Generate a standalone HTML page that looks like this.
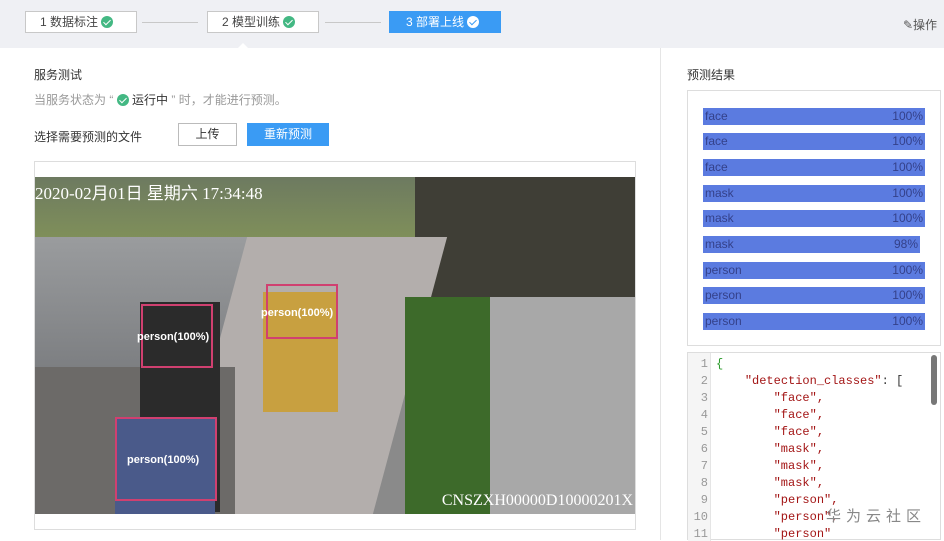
<!DOCTYPE html><html><head><meta charset="utf-8"><style>
*{margin:0;padding:0;box-sizing:border-box}
body{width:944px;height:540px;overflow:hidden;background:#fff;font-family:"Liberation Sans","Noto Sans CJK SC",sans-serif;font-size:12px;color:#333;position:relative}
.top{position:absolute;left:0;top:0;width:944px;height:48px;background:#eff0f4}
.step{position:absolute;top:11px;height:22px;border:1px solid #c8c8c8;background:#fff;font-size:12px;line-height:20px;padding-left:14px;color:#444}
.step.a{background:#3a9bf4;border-color:#3a9bf4;color:#fff}
.chk{display:inline-block;width:12px;height:12px;border-radius:50%;background:#43b883;vertical-align:-2px;margin-left:3px;position:relative}
.chk:after{content:"";position:absolute;left:4px;top:2px;width:3px;height:6px;border:solid #fff;border-width:0 1.5px 1.5px 0;transform:rotate(45deg)}
.chk.w{background:#fff}.chk.w:after{border-color:#3a9bf4}
.line{position:absolute;top:22px;height:1px;background:#c8c8c8}
.abs{position:absolute}
.bar{position:absolute;left:703px;width:222px;height:17px;background:#5b7be0;color:#34418a;font-size:12px;line-height:17px;padding:0 2px}
.bar span{position:absolute;right:2px}
.code{position:absolute;left:687px;top:352px;width:254px;height:188px;border:1px solid #ddd;font-family:"Liberation Mono",monospace;font-size:12px}
.gut{position:absolute;left:0;top:0;width:23px;height:188px;background:#f5f5f5;border-right:1px solid #e5e5e5}
.ln{position:absolute;left:0;width:20px;text-align:right;color:#999}
.cl{position:absolute;left:28px;color:#a31515;white-space:pre}
</style></head><body>
<div class="top"></div>
<div class="step" style="left:25px;width:112px">1 数据标注<span class="chk"></span></div>
<div class="line" style="left:142px;width:56px"></div>
<div class="step" style="left:207px;width:112px">2 模型训练<span class="chk"></span></div>
<div class="line" style="left:325px;width:56px"></div>
<div class="step a" style="left:389px;width:112px;padding-left:16px">3 部署上线<span class="chk w"></span></div>
<div class="abs" style="left:237px;top:43px;width:0;height:0;border-left:6px solid transparent;border-right:6px solid transparent;border-bottom:6px solid #fff"></div>
<div class="abs" style="left:903px;top:16px;color:#555">&#9998;操作</div>
<div class="abs" style="left:10px;top:48px;width:650px;height:492px;background:#fff"></div>
<div class="abs" style="left:660px;top:48px;width:1px;height:492px;background:#e5e5e5"></div>
<div class="abs" style="left:34px;top:66px">服务测试</div>
<div class="abs" style="left:34px;top:91px;color:#999">当服务状态为 “ <span class="chk" style="margin:0"></span> <span style="color:#333">运行中</span> ” 时，才能进行预测。</div>
<div class="abs" style="left:34px;top:128px">选择需要预测的文件</div>
<div class="abs" style="left:178px;top:123px;width:59px;height:23px;border:1px solid #bbb;text-align:center;line-height:21px">上传</div>
<div class="abs" style="left:247px;top:123px;width:82px;height:23px;background:#3a9bf4;color:#fff;text-align:center;line-height:23px">重新预测</div>
<div class="abs" style="left:34px;top:161px;width:602px;height:369px;border:1px solid #ddd"></div>
<div class="abs" style="left:35px;top:177px;width:600px;height:337px;overflow:hidden;background:#8a8a8a">
 <div class="abs" style="left:0;top:0;width:380px;height:60px;background:linear-gradient(#6d7a60,#7f8f5a)"></div>
 <div class="abs" style="left:0;top:60px;width:380px;height:130px;background:linear-gradient(#9a9c9e,#7d7f82)"></div>
 <div class="abs" style="left:380px;top:0;width:220px;height:120px;background:#3f3e36"></div>
 <div class="abs" style="left:175px;top:60px;width:200px;height:277px;background:#b3aeac;transform:skewX(-15deg)"></div>
 <div class="abs" style="left:370px;top:120px;width:100px;height:217px;background:#3d6a2a"></div>
 <div class="abs" style="left:455px;top:120px;width:145px;height:217px;background:#a8a8a8"></div>
 <div class="abs" style="left:0;top:190px;width:200px;height:147px;background:#6c6a68"></div>
 <div class="abs" style="left:228px;top:115px;width:75px;height:120px;background:#c8a040"></div>
 <div class="abs" style="left:105px;top:125px;width:80px;height:210px;background:#2b2b2b"></div>
 <div class="abs" style="left:80px;top:240px;width:100px;height:97px;background:#4a5a8a"></div>
 <div class="abs" style="left:0;top:2px;color:#fff;font-family:'Liberation Serif',serif;font-size:17px">2020-02月01日 星期六 17:34:48</div>
 <div class="abs" style="right:2px;bottom:4px;color:#fff;font-family:'Liberation Serif',serif;font-size:16px">CNSZXH00000D10000201X</div>
 <div class="abs" style="left:231px;top:107px;width:72px;height:55px;border:2px solid #d04070"></div>
 <div class="abs" style="left:106px;top:127px;width:72px;height:64px;border:2px solid #d04070"></div>
 <div class="abs" style="left:80px;top:240px;width:102px;height:84px;border:2px solid #d04070"></div>
 <div class="abs" style="left:226px;top:130px;color:#fff;font-size:11px;font-weight:bold">person(100%)</div>
 <div class="abs" style="left:102px;top:154px;color:#fff;font-size:11px;font-weight:bold">person(100%)</div>
 <div class="abs" style="left:92px;top:277px;color:#fff;font-size:11px;font-weight:bold">person(100%)</div>
</div>
<div class="abs" style="left:687px;top:66px">预测结果</div>
<div class="abs" style="left:687px;top:90px;width:254px;height:256px;border:1px solid #ddd"></div>
<div class="bar" style="top:108px">face<span>100%</span></div>
<div class="bar" style="top:133px">face<span>100%</span></div>
<div class="bar" style="top:159px">face<span>100%</span></div>
<div class="bar" style="top:185px">mask<span>100%</span></div>
<div class="bar" style="top:210px">mask<span>100%</span></div>
<div class="bar" style="top:236px;width:217px">mask<span>98%</span></div>
<div class="bar" style="top:262px">person<span>100%</span></div>
<div class="bar" style="top:287px">person<span>100%</span></div>
<div class="bar" style="top:313px">person<span>100%</span></div>
<div class="code"><div class="gut"></div>
<div class="ln" style="top:4px">1</div><div class="cl" style="top:4px;color:#2a9a2a">{</div>
<div class="ln" style="top:21px">2</div><div class="cl" style="top:21px;color:#333">    <span style="color:#a31515">"detection_classes"</span>: [</div>
<div class="ln" style="top:38px">3</div><div class="cl" style="top:38px">        "face",</div>
<div class="ln" style="top:55px">4</div><div class="cl" style="top:55px">        "face",</div>
<div class="ln" style="top:72px">5</div><div class="cl" style="top:72px">        "face",</div>
<div class="ln" style="top:89px">6</div><div class="cl" style="top:89px">        "mask",</div>
<div class="ln" style="top:106px">7</div><div class="cl" style="top:106px">        "mask",</div>
<div class="ln" style="top:123px">8</div><div class="cl" style="top:123px">        "mask",</div>
<div class="ln" style="top:140px">9</div><div class="cl" style="top:140px">        "person",</div>
<div class="ln" style="top:157px">10</div><div class="cl" style="top:157px">        "person",</div>
<div class="ln" style="top:174px">11</div><div class="cl" style="top:174px">        "person"</div>
<div class="abs" style="right:3px;top:2px;width:6px;height:50px;background:#777;border-radius:3px"></div>
<div class="abs" style="left:138px;top:152px;color:#888;font-family:'Noto Sans CJK SC',sans-serif;font-size:15px;letter-spacing:5px">华为云社区</div>
</div>
</body></html>
